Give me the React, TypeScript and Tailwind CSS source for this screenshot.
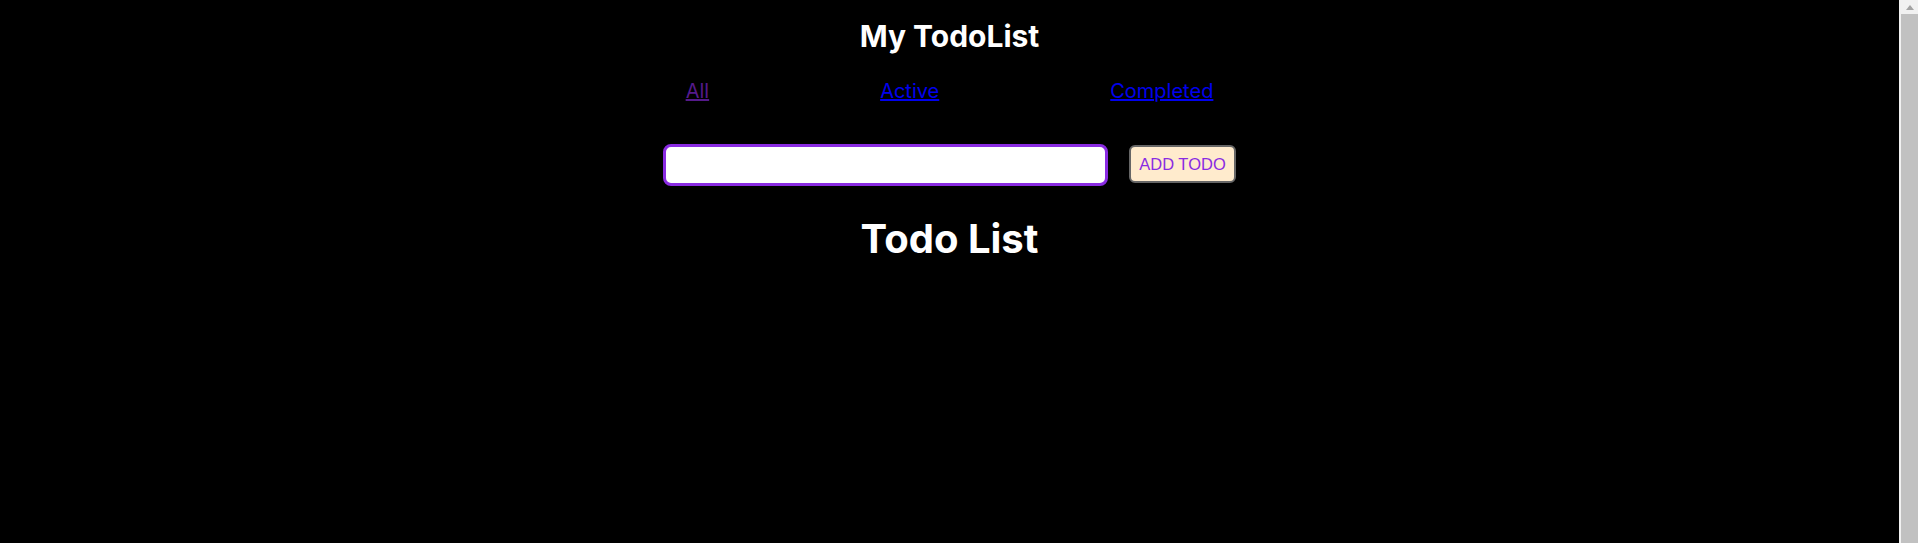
export default function App() {
  return (
    <div className="flex min-h-[543px] bg-black">
      <div className="flex-1 flex flex-col items-center font-['Inter',sans-serif] text-white">
        <h2 className="mt-[18px] text-[30px] leading-[36px] font-bold">My TodoList</h2>
        <nav className="mt-[25px] flex gap-[171px] text-[20px] leading-[24px]">
          <a href="#all" className="underline text-[#551a8b]">All</a>
          <a href="#active" className="underline text-[#0000ee]">Active</a>
          <a href="#completed" className="underline text-[#0000ee]">Completed</a>
        </nav>
        <div className="mt-[41px] flex items-start gap-[21px]">
          <input
            type="text"
            className="w-[445px] h-[42px] rounded-[8px] border-[3px] border-[#8a2be2] bg-white outline-none px-2 text-black"
          />
          <button className="mt-px w-[107px] h-[38px] rounded-[6px] border-2 border-[#666] bg-[#ffebcd] text-[#8a2be2] text-[16.5px] font-['Liberation_Sans',Arial,sans-serif]">
            ADD TODO
          </button>
        </div>
        <h1 className="mt-[29px] text-[40px] leading-[48px] font-bold">Todo List</h1>
      </div>
      <div className="w-[19px] flex flex-col bg-[#f1f1f1] pl-[2px]">
        <div className="h-[14px] flex items-center justify-center">
          <svg width="8" height="5" viewBox="0 0 8 5">
            <path d="M4 0 L8 5 L0 5 Z" fill="#a3a3a3" />
          </svg>
        </div>
        <div className="flex-1 bg-[#c1c1c1]" />
      </div>
    </div>
  );
}
